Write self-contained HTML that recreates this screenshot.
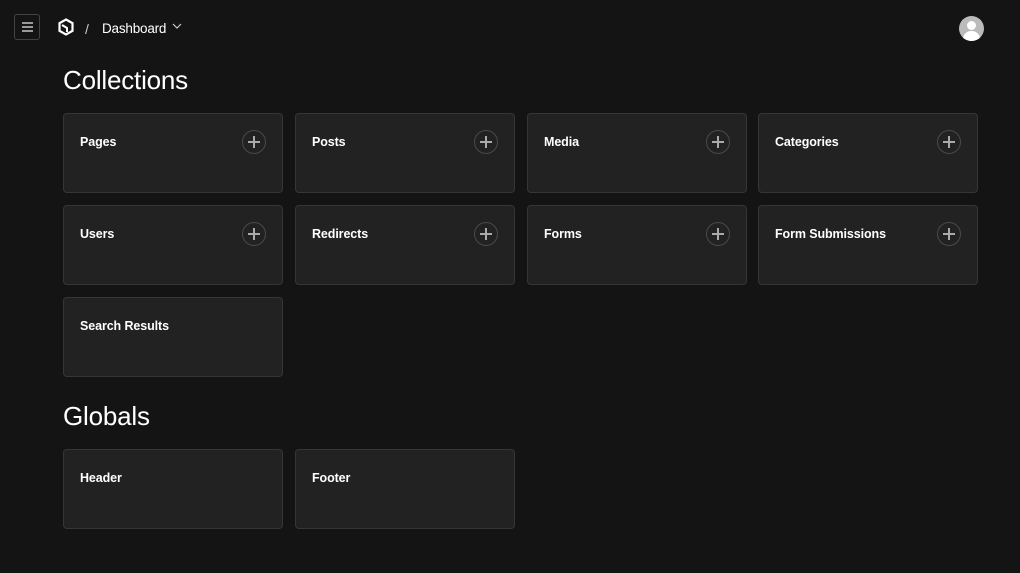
<!DOCTYPE html>
<html><head><style>
body{margin:0;background:#141414;width:1020px;height:573px;overflow:hidden;font-family:"Liberation Sans",sans-serif;color:#fff;position:relative}
.abs{position:absolute}
.card{position:absolute;width:218px;height:78px;background:#222;border:1px solid #363636;border-radius:4px}
.card span{position:absolute;left:16px;top:21px;font-size:12.5px;font-weight:bold;color:#fff;letter-spacing:-0.1px}
.card .p{position:absolute;left:178px;top:16px;width:22px;height:22px;border:1px solid #4a4a4a;border-radius:50%}
.card .p:before,.card .p:after{content:"";position:absolute;background:#aaa}
.card .p:before{left:5px;top:10.3px;width:12px;height:1.4px}
.card .p:after{left:10.3px;top:5px;width:1.4px;height:12px}
h2{position:absolute;margin:0;font-weight:normal;font-size:26px;left:63px;letter-spacing:-0.2px}
</style></head><body>
<div class="abs" style="left:14px;top:14px;width:24px;height:24px;border:1px solid #444;border-radius:3px">
<div class="abs" style="left:7px;top:7px;width:11px;height:2px;background:#999"></div>
<div class="abs" style="left:7px;top:11px;width:11px;height:2px;background:#999"></div>
<div class="abs" style="left:7px;top:15px;width:11px;height:2px;background:#999"></div>
</div>
<svg class="abs" style="left:57px;top:18px" width="18" height="18" viewBox="0 0 18 18"><path d="M9 1.5L15.5 5.2V12.8L9 16.5L2.5 12.8V5.2Z" fill="none" stroke="#fff" stroke-width="2.2"/><path d="M5 7L10 10V14" fill="none" stroke="#fff" stroke-width="2"/></svg>
<div class="abs" style="left:85px;top:21px;font-size:14px;color:#ccc">/</div>
<div class="abs" style="left:102px;top:21px;font-size:13.5px;letter-spacing:-0.2px">Dashboard</div>
<svg class="abs" style="left:172px;top:23px" width="10" height="6"><path d="M1 1L5 5L9 1" fill="none" stroke="#ccc" stroke-width="1.2"/></svg>
<div class="abs" style="left:959px;top:16px;width:25px;height:25px;border-radius:50%;background:#bbb;overflow:hidden">
<div class="abs" style="left:8px;top:5px;width:9px;height:9px;border-radius:50%;background:#fff"></div>
<div class="abs" style="left:4px;top:15px;width:17px;height:12px;border-radius:8px 8px 0 0;background:#fff"></div>
</div>
<h2 style="top:65px">Collections</h2>
<div class="card" style="left:63px;top:113px"><span>Pages</span><div class="p"></div></div>
<div class="card" style="left:295px;top:113px"><span>Posts</span><div class="p"></div></div>
<div class="card" style="left:527px;top:113px"><span>Media</span><div class="p"></div></div>
<div class="card" style="left:758px;top:113px"><span>Categories</span><div class="p"></div></div>
<div class="card" style="left:63px;top:205px"><span>Users</span><div class="p"></div></div>
<div class="card" style="left:295px;top:205px"><span>Redirects</span><div class="p"></div></div>
<div class="card" style="left:527px;top:205px"><span>Forms</span><div class="p"></div></div>
<div class="card" style="left:758px;top:205px"><span>Form Submissions</span><div class="p"></div></div>
<div class="card" style="left:63px;top:297px"><span>Search Results</span></div>
<h2 style="top:401px">Globals</h2>
<div class="card" style="left:63px;top:449px"><span>Header</span></div>
<div class="card" style="left:295px;top:449px"><span>Footer</span></div>
</body></html>
